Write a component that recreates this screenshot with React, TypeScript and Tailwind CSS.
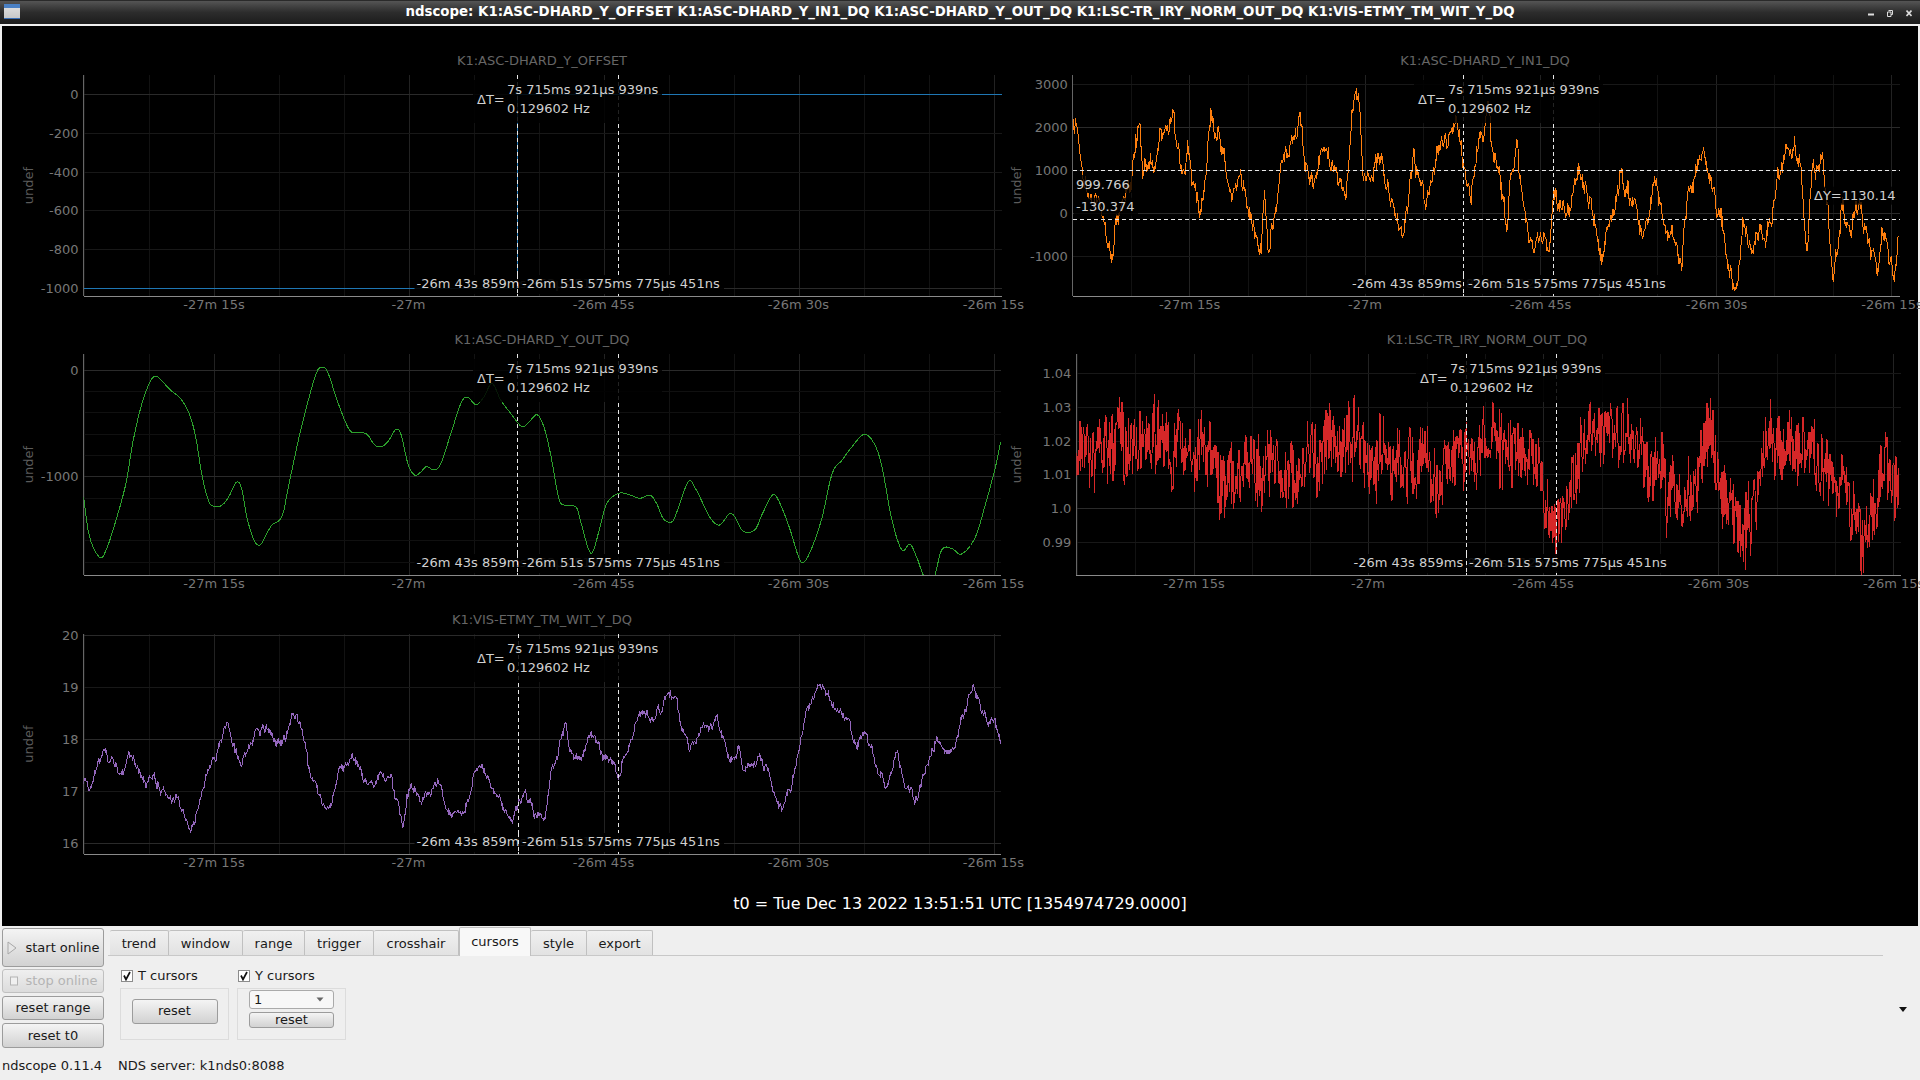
import { useMemo } from 'react'

type Pt = [number, number]

type YLine = { y: number; label?: string; strong?: boolean }

type PlotProps = {
  id: string
  title: string
  box: { x: number; y: number; w: number; h: number }
  x0: number
  x1: number
  y0: number
  y1: number
  titleX: number
  undefX: number
  ticks: number[]
  step: number
  ylines: YLine[]
  t1: number
  t2: number
  deltaX: number
  textX: number
  firstX: number
  secondX: number
  color: string
  line: string
  children?: React.ReactNode
}

const TICK_LABELS = ['-27m 15s', '-27m', '-26m 45s', '-26m 30s', '-26m 15s']

// 低成本的可复现随机数，保证每次渲染的噪声一致
const makeRandom = (seed: number) => {
  let s = seed
  return () => {
    s = (s * 1664525 + 1013904223) % 4294967296
    return s / 4294967296
  }
}

const toPage = (pts: Pt[], sx: number, ox: number, oy: number): Pt[] =>
  pts.map(([x, y]) => [x / sx + ox, y / 3 + oy])

const interp = (pts: Pt[], x: number) => {
  for (let i = 1; i < pts.length; i++) {
    if (x <= pts[i][0]) {
      const [ax, ay] = pts[i - 1]
      const [bx, by] = pts[i]
      return ay + ((by - ay) * (x - ax)) / (bx - ax)
    }
  }
  return pts[pts.length - 1][1]
}

const noisy = (pts: Pt[], seed: number, step: number, walk: number, white: number, spike = 0) => {
  const rand = makeRandom(seed)
  const out: string[] = []
  let ar = 0
  const end = pts[pts.length - 1][0]
  for (let x = pts[0][0]; x <= end; x += step) {
    ar = ar * 0.8 + (rand() - 0.5) * walk
    let n = (rand() - 0.5) * white
    if (spike && rand() < 0.07) n = Math.abs(n) * spike
    out.push(`${x.toFixed(1)},${(interp(pts, x) + ar + n).toFixed(1)}`)
  }
  return out.join(' ')
}

const smooth = (pts: Pt[]) => {
  const out: string[] = []
  for (let i = 0; i < pts.length - 1; i++) {
    const p0 = pts[Math.max(0, i - 1)]
    const p1 = pts[i]
    const p2 = pts[i + 1]
    const p3 = pts[Math.min(pts.length - 1, i + 2)]
    for (let k = 0; k < 6; k++) {
      const t = k / 6
      const c = (a: number, b: number, d: number, e: number) =>
        0.5 *
        (2 * b + (d - a) * t + (2 * a - 5 * b + 4 * d - e) * t * t + (3 * b - a - 3 * d + e) * t * t * t)
      out.push(`${c(p0[0], p1[0], p2[0], p3[0]).toFixed(1)},${c(p0[1], p1[1], p2[1], p3[1]).toFixed(1)}`)
    }
  }
  return out.join(' ')
}

const ORANGE: Pt[] = [[124,385],[133,410],[138,510],[148,560],[160,630],[175,650],[183,700],[190,768],[200,650],[215,570],[225,495],[238,410],[243,525],[255,470],[265,490],[272,405],[285,340],[295,315],[302,400],[312,525],[320,470],[328,545],[338,612],[348,550],[360,330],[372,400],[382,480],[388,595],[400,540],[410,500],[420,620],[435,690],[445,745],[450,570],[458,730],[470,590],[480,500],[490,430],[500,400],[511,335],[520,490],[535,535],[550,425],[565,480],[580,560],[590,605],[600,340],[612,292],[618,490],[628,550],[648,478],[660,570],[670,640],[684,680],[695,620],[705,460],[715,515],[725,640],[735,540],[750,405],[765,440],[780,410],[790,530],[803,585],[820,385],[832,295],[840,470],[850,520],[864,710],[870,530],[880,450],[888,580],[905,770],[920,680],[935,720],[945,610],[965,640],[985,545],[1000,570],[1010,610],[1025,775],[1040,640],[1058,510],[1070,590],[1082,625],[1095,695],[1115,545],[1130,640],[1143,690],[1162,770],[1175,590],[1195,465],[1210,530],[1222,630],[1240,790],[1255,870],[1265,680],[1280,720],[1295,670],[1305,715],[1320,600],[1333,490],[1345,450],[1354,415],[1365,510],[1375,750],[1382,530],[1402,495],[1412,650],[1420,810],[1435,610],[1450,680],[1465,630],[1480,720],[1495,835],[1505,700],[1515,800],[1525,820],[1531,680]]

const GREEN: Pt[] = [[126,530],[135,650],[150,712],[160,690],[175,600],[190,490],[200,370],[212,265],[225,190],[235,168],[245,185],[258,212],[272,235],[285,280],[295,350],[305,470],[315,545],[325,560],[335,555],[345,530],[357,486],[365,510],[372,590],[383,660],[392,675],[400,650],[410,615],[425,590],[435,500],[450,360],[465,240],[478,155],[487,142],[495,160],[510,250],[527,330],[540,338],[553,342],[565,375],[575,380],[585,365],[597,328],[605,345],[615,430],[625,465],[635,455],[643,440],[655,450],[665,430],[680,340],[695,250],[705,232],[718,254],[730,230],[742,190],[755,240],[770,280],[787,320],[798,305],[810,284],[820,320],[830,400],[842,530],[850,555],[868,560],[875,600],[888,690],[895,690],[905,620],[915,550],[933,520],[950,525],[965,535],[980,525],[990,550],[1000,595],[1012,607],[1020,580],[1038,485],[1050,510],[1070,590],[1085,615],[1103,580],[1120,632],[1138,630],[1150,580],[1165,525],[1175,545],[1190,620],[1205,715],[1213,725],[1225,680],[1240,590],[1255,460],[1270,420],[1285,380],[1303,343],[1318,370],[1330,440],[1345,600],[1360,690],[1372,672],[1382,710],[1395,775],[1408,775],[1420,690],[1435,685],[1450,702],[1470,655],[1485,560],[1500,450],[1510,355]]

const RED: Pt[] = [[130,440],[180,360],[240,370],[300,370],[360,400],[370,470],[420,410],[500,470],[550,370],[590,350],[640,430],[680,410],[740,470],[790,400],[850,340],[900,400],[945,640],[1000,350],[1060,360],[1110,430],[1165,570],[1210,330],[1260,700],[1300,350],[1380,400],[1420,480],[1470,680],[1510,420],[1530,500]]

const PURPLE: Pt[] = [[126,555],[137,580],[155,465],[178,525],[195,462],[218,555],[232,520],[250,590],[268,595],[288,680],[300,630],[315,495],[328,450],[343,365],[362,480],[375,465],[387,385],[400,400],[425,445],[442,350],[455,370],[465,490],[485,615],[495,610],[515,500],[537,480],[555,545],[575,520],[590,555],[607,670],[620,545],[640,590],[660,545],[672,630],[698,665],[718,490],[735,525],[750,590],[772,665],[792,565],[805,635],[822,660],[832,515],[853,375],[860,460],[870,495],[893,408],[905,450],[932,522],[950,420],[965,330],[990,350],[1005,280],[1017,275],[1032,400],[1043,445],[1060,380],[1083,365],[1100,480],[1115,435],[1122,525],[1145,470],[1165,565],[1180,645],[1200,500],[1215,340],[1237,248],[1250,290],[1270,340],[1290,420],[1305,410],[1318,470],[1335,570],[1355,455],[1365,560],[1383,600],[1395,515],[1412,415],[1430,460],[1450,370],[1467,255],[1480,340],[1490,360],[1500,350],[1510,420]]

const Plot = ({
  id,
  title,
  box,
  x0,
  x1,
  y0,
  y1,
  titleX,
  undefX,
  ticks,
  step,
  ylines,
  t1,
  t2,
  deltaX,
  textX,
  firstX,
  secondX,
  color,
  line,
  children
}: PlotProps) => {
  const gridXs = useMemo(() => {
    const xs: { x: number; major: boolean }[] = []
    for (let i = -3; i < 16; i++) {
      const x = ticks[0] + i * step
      if (x > x0 && x < x1) xs.push({ x, major: (i + 300) % 3 === 0 })
    }
    return xs
  }, [ticks, step, x0, x1])

  const textY = y0 + 15
  const bottomY = y1 - 12

  return (
    <svg
      viewBox={`${box.x} ${box.y} ${box.w} ${box.h}`}
      width={box.w}
      height={box.h}
      className="block overflow-visible text-[13px]"
    >
      <defs>
        <clipPath id={id}>
          <rect x={x0} y={y0} width={x1 - x0} height={y1 - y0} />
        </clipPath>
      </defs>
      <text x={titleX} y={y0 - 14} textAnchor="middle" dominantBaseline="middle" fill="#666">
        {title}
      </text>
      <text
        x={undefX + 1}
        y={(y0 + y1) / 2}
        textAnchor="middle"
        dominantBaseline="middle"
        fill="#5c5c5c"
        transform={`rotate(-90 ${undefX + 1} ${(y0 + y1) / 2})`}
      >
        undef
      </text>
      {gridXs.map(g => (
        <line key={g.x} x1={g.x} x2={g.x} y1={y0} y2={y1} stroke={g.major ? '#222' : '#121212'} shapeRendering="crispEdges" />
      ))}
      {ylines.map(l => (
        <g key={l.y}>
          <line
            x1={x0}
            x2={x1}
            y1={l.y}
            y2={l.y}
            stroke={l.strong ? '#2a2a2a' : l.label ? '#181818' : '#101010'}
            shapeRendering="crispEdges"
          />
          {l.label && (
            <text x={x0 - 5} y={l.y + 1} textAnchor="end" dominantBaseline="middle" fill="#777">
              {l.label}
            </text>
          )}
        </g>
      ))}
      <line x1={x0} x2={x0} y1={y0} y2={y1} stroke="#666" shapeRendering="crispEdges" />
      <line x1={x0} x2={x1} y1={y1 + 0.5} y2={y1 + 0.5} stroke="#8a8a8a" shapeRendering="crispEdges" />
      {ticks.map((t, i) => (
        <text key={t} x={t} y={y1 + 9} textAnchor="middle" dominantBaseline="middle" fill="#777">
          {TICK_LABELS[i]}
        </text>
      ))}
      <g clipPath={`url(#${id})`}>
        <polyline points={line} fill="none" stroke={color} strokeWidth={1} shapeRendering="crispEdges" />
      </g>
      <line x1={t1} x2={t1} y1={y0} y2={y1} stroke="#e8e8e8" strokeDasharray="4 3" shapeRendering="crispEdges" />
      <line x1={t2} x2={t2} y1={y0} y2={y1} stroke="#e8e8e8" strokeDasharray="4 3" shapeRendering="crispEdges" />
      {children}
      <rect x={deltaX - 4} y={y0 + 5} width={textX + 155 - deltaX + 4} height={43} fill="#000" opacity={0.85} />
      <text x={deltaX} y={textY + 10} dominantBaseline="middle" fill="#d0d0d0">
        ΔT=
      </text>
      <text x={textX} y={textY} dominantBaseline="middle" fill="#d0d0d0">
        7s 715ms 921µs 939ns
      </text>
      <text x={textX} y={textY + 19} dominantBaseline="middle" fill="#d0d0d0">
        0.129602 Hz
      </text>
      <rect x={firstX - 2} y={bottomY - 9} width={204} height={19} fill="#000" opacity={0.9} />
      <text x={firstX} y={bottomY} dominantBaseline="middle" fill="#d0d0d0">
        -26m 43s 859ms 853µs 512ns
      </text>
      <rect x={secondX - 2} y={bottomY - 9} width={204} height={19} fill="#000" opacity={0.92} />
      <text x={secondX} y={bottomY} dominantBaseline="middle" fill="#d0d0d0">
        -26m 51s 575ms 775µs 451ns
      </text>
      <line x1={t1} x2={t1} y1={bottomY - 9} y2={y1} stroke="#e8e8e8" strokeDasharray="4 3" shapeRendering="crispEdges" />
    </svg>
  )
}

const CursorTag = ({ x, y, w, text }: { x: number; y: number; w: number; text: string }) => (
  <g>
    <rect x={x - 2} y={y - 9} width={w} height={18} fill="#000" opacity={0.8} />
    <text x={x} y={y + 1} dominantBaseline="middle" fill="#d0d0d0">
      {text}
    </text>
  </g>
)

const Scope = () => {
  const lines = useMemo(
    () => ({
      orange: noisy(toPage(ORANGE, 1.704, 1000, 0), 11, 0.7, 15, 12),
      green: smooth(toPage(GREEN, 1.508, 0, 320)),
      red: noisy(toPage(RED, 1.701, 1000, 320), 23, 0.6, 20, 62, 1.5),
      purple: noisy(toPage(PURPLE, 1.508, 0, 600), 37, 0.7, 8, 5)
    }),
    []
  )

  const ticksL = [214, 408.5, 603.5, 798.4, 993.4]

  return (
    <div className="h-[900px] mx-[2px] bg-black flex flex-col text-white">
      <div className="grid grid-cols-[1004px_912px] pt-[14px]">
        <Plot
          id="p1"
          title="K1:ASC-DHARD_Y_OFFSET"
          box={{ x: 2, y: 40, w: 1004, h: 279 }}
          x0={83.5}
          x1={1002}
          y0={75}
          y1={296}
          titleX={542}
          undefX={28}
          ticks={ticksL}
          step={65}
          ylines={[
            { y: 94.7, label: '0', strong: true },
            { y: 133.7, label: '-200' },
            { y: 172.7, label: '-400' },
            { y: 210.7, label: '-600' },
            { y: 249.5, label: '-800' },
            { y: 288.7, label: '-1000', strong: true }
          ]}
          t1={517.4}
          t2={618.5}
          deltaX={477}
          textX={507}
          firstX={416.5}
          secondX={522}
          color="#1f77b4"
          line="83.5,288.7 517,288.7 517,94.7 1002,94.7"
        />
        <Plot
          id="p2"
          title="K1:ASC-DHARD_Y_IN1_DQ"
          box={{ x: 1006, y: 40, w: 912, h: 279 }}
          x0={1072.8}
          x1={1899.6}
          y0={75}
          y1={296}
          titleX={1485}
          undefX={1016}
          ticks={[1189.6, 1365, 1540.5, 1716.5, 1892]}
          step={58.5}
          ylines={[
            { y: 84.7, label: '3000' },
            { y: 127.3, label: '2000', strong: true },
            { y: 170.7, label: '1000' },
            { y: 213.7, label: '0', strong: true },
            { y: 256.7, label: '-1000' }
          ]}
          t1={1463.6}
          t2={1553.4}
          deltaX={1418}
          textX={1448}
          firstX={1352}
          secondX={1468}
          color="#ff7f0e"
          line={lines.orange}
        >
          <line x1={1072.8} x2={1899.6} y1={170.5} y2={170.5} stroke="#e8e8e8" strokeDasharray="4 3" shapeRendering="crispEdges" />
          <line x1={1072.8} x2={1899.6} y1={219.5} y2={219.5} stroke="#e8e8e8" strokeDasharray="4 3" shapeRendering="crispEdges" />
          <CursorTag x={1076} y={184} w={58} text="999.766" />
          <CursorTag x={1076} y={206.7} w={64} text="-130.374" />
          <CursorTag x={1814} y={195.7} w={84} text="ΔY=1130.14" />
        </Plot>
        <Plot
          id="p3"
          title="K1:ASC-DHARD_Y_OUT_DQ"
          box={{ x: 2, y: 319, w: 1004, h: 280 }}
          x0={83.5}
          x1={1001}
          y0={354}
          y1={575}
          titleX={542}
          undefX={28}
          ticks={ticksL}
          step={65}
          ylines={[
            { y: 370, label: '0', strong: true },
            { y: 391.3 },
            { y: 412.6 },
            { y: 434 },
            { y: 455.3 },
            { y: 476.7, label: '-1000', strong: true },
            { y: 498 },
            { y: 519.3 },
            { y: 540.6 },
            { y: 562 }
          ]}
          t1={517}
          t2={618.7}
          deltaX={477}
          textX={507}
          firstX={416.5}
          secondX={522}
          color="#2ca02c"
          line={lines.green}
        />
        <Plot
          id="p4"
          title="K1:LSC-TR_IRY_NORM_OUT_DQ"
          box={{ x: 1006, y: 319, w: 912, h: 280 }}
          x0={1076.4}
          x1={1901}
          y0={354}
          y1={575}
          titleX={1487}
          undefX={1016.5}
          ticks={[1194, 1368, 1543, 1718.4, 1893.6]}
          step={58.3}
          ylines={[
            { y: 373.3, label: '1.04' },
            { y: 407.7, label: '1.03' },
            { y: 441.3, label: '1.02' },
            { y: 474.7, label: '1.01' },
            { y: 508.7, label: '1.0', strong: true },
            { y: 542.3, label: '0.99' }
          ]}
          t1={1466}
          t2={1556.7}
          deltaX={1420}
          textX={1450}
          firstX={1353.5}
          secondX={1469}
          color="#d62728"
          line={lines.red}
        />
        <Plot
          id="p5"
          title="K1:VIS-ETMY_TM_WIT_Y_DQ"
          box={{ x: 2, y: 599, w: 1004, h: 279 }}
          x0={83.5}
          x1={1001}
          y0={634}
          y1={854}
          titleX={542}
          undefX={28}
          ticks={ticksL}
          step={65}
          ylines={[
            { y: 635.3, label: '20', strong: true },
            { y: 687.3, label: '19' },
            { y: 739.3, label: '18', strong: true },
            { y: 791.3, label: '17' },
            { y: 843.3, label: '16', strong: true }
          ]}
          t1={518.6}
          t2={618.7}
          deltaX={477}
          textX={507}
          firstX={416.5}
          secondX={522}
          color="#9467bd"
          line={lines.purple}
        />
      </div>
      <div className="flex-1 flex items-center justify-center text-[16px] pt-[3px]">
        t0 = Tue Dec 13 2022 13:51:51 UTC [1354974729.0000]
      </div>
    </div>
  )
}

const btn =
  'flex items-center justify-center rounded-[3px] border border-[#9c9c9c] bg-gradient-to-b from-[#f4f4f4] to-[#d2d2d2] text-[#1a1a1a]'

const TABS = ['trend', 'window', 'range', 'trigger', 'crosshair', 'cursors', 'style', 'export']
const TAB_WIDTHS = ['w-[59px]', 'w-[74px]', 'w-[62px]', 'w-[69px]', 'w-[85px]', 'w-[72px]', 'w-[56px]', 'w-[66px]']

const Check = ({ label }: { label: string }) => (
  <div className="flex items-center h-[12px] gap-[5px] pl-[1px]">
    <span className="w-[12px] h-[12px] border border-[#8c8c8c] bg-white flex items-center justify-center">
      <svg width="10" height="10" viewBox="0 0 10 10">
        <path d="M2 4.5 L4 8.5 L8 1" fill="none" stroke="#111" strokeWidth="1.7" />
      </svg>
    </span>
    <span>{label}</span>
  </div>
)

const Controls = () => (
  <div className="flex-1 relative flex bg-[#efefef] text-[13px] text-[#1a1a1a]">
    <div className="flex flex-col w-[108px] pl-[2px] pt-[2px]">
      <button type="button" className={`${btn} w-[102px] h-[39px] gap-[7px]`}>
        <svg width="12" height="16" viewBox="0 0 12 16">
          <path d="M2 2 L10 8 L2 14 Z" fill="#e6e6e6" stroke="#a8a8a8" />
        </svg>
        <span>start online</span>
      </button>
      <button
        type="button"
        className="mt-[2px] w-[102px] h-[24px] flex items-center justify-center gap-[7px] rounded-[3px] border border-[#c0c0c0] bg-gradient-to-b from-[#efefef] to-[#dcdcdc] text-[#b4b4b4]"
      >
        <svg width="10" height="12" viewBox="0 0 10 12">
          <rect x="1.5" y="2" width="7" height="8" fill="#f0f0f0" stroke="#b4b4b4" />
        </svg>
        <span>stop online</span>
      </button>
      <button type="button" className={`${btn} mt-[3px] w-[102px] h-[24px]`}>
        reset range
      </button>
      <button type="button" className={`${btn} mt-[3px] w-[102px] h-[25px]`}>
        reset t0
      </button>
    </div>
    <div className="flex-1 flex flex-col pt-[2px]">
      <div className="flex items-end h-[28px] w-[1775px] border-b border-[#c8c8c8]">
        <div className="w-[2px]" />
        {TABS.map((tab, i) => (
          <div
            key={tab}
            className={
              tab === 'cursors'
                ? `${TAB_WIDTHS[i]} h-[29px] -mb-[1px] pb-[1px] flex items-center justify-center bg-[#f8f8f8] border border-b-0 border-[#c0c0c0] rounded-t-[2px]`
                : `${TAB_WIDTHS[i]} h-[25px] pt-[1px] flex items-center justify-center bg-gradient-to-b from-[#f0f0f0] to-[#e2e2e2] border border-b-0 border-l-0 first:border-l border-[#c0c0c0] rounded-t-[2px]`
            }
          >
            {tab}
          </div>
        ))}
      </div>
      <div className="flex gap-[8px] pl-[12px] pt-[14px]">
        <div className="flex flex-col w-[109px]">
          <Check label="T cursors" />
          <div className="mt-[6px] h-[52px] pb-[6px] border border-[#dcdcdc] flex items-center justify-center">
            <button type="button" className={`${btn} w-[86px] h-[25px]`}>
              reset
            </button>
          </div>
        </div>
        <div className="flex flex-col w-[109px]">
          <Check label="Y cursors" />
          <div className="mt-[6px] h-[52px] border border-[#dcdcdc] flex flex-col items-center pt-[1px]">
            <div className="w-[85px] h-[19px] flex items-center justify-between pl-[4px] pr-[9px] bg-[#f7f7f7] border border-[#aaa] rounded-[3px]">
              <span>1</span>
              <svg width="8" height="5" viewBox="0 0 8 5">
                <path d="M0.5 0.5 H7.5 L4 4.5 Z" fill="#666" />
              </svg>
            </div>
            <button type="button" className={`${btn} mt-[3px] w-[85px] h-[16px]`}>
              reset
            </button>
          </div>
        </div>
      </div>
    </div>
    <svg className="absolute right-[13px] top-[81px]" width="8" height="5" viewBox="0 0 8 5">
      <path d="M0 0 H8 L4 5 Z" fill="#111" />
    </svg>
    <div className="absolute left-[2px] bottom-[5px] flex gap-[16px]">
      <span>ndscope 0.11.4</span>
      <span>NDS server: k1nds0:8088</span>
    </div>
  </div>
)

const TitleBar = () => (
  <div className="relative h-[24px] shrink-0 flex items-center justify-center bg-gradient-to-b from-[#555555] via-[#2c2c2c] via-50% to-[#1c1c1c] border-t border-[#2a2a2a]">
    <div className="absolute left-[4px] top-[3px] w-[16px] h-[15px] bg-gradient-to-b from-[#dcdcdc] to-[#c8c8c8] border-t-[4px] border-b border-t-[#4a80c4] border-b-[#3a70b8]" />
    <span className="text-[13.35px] font-bold text-white -mt-[1px]">
      ndscope: K1:ASC-DHARD_Y_OFFSET K1:ASC-DHARD_Y_IN1_DQ K1:ASC-DHARD_Y_OUT_DQ K1:LSC-TR_IRY_NORM_OUT_DQ K1:VIS-ETMY_TM_WIT_Y_DQ
    </span>
    <div className="absolute right-[8px] top-[8px] flex items-center gap-[13px]">
      <svg width="6" height="8" viewBox="0 0 6 8">
        <rect x="0" y="4.5" width="6" height="2" fill="#ddd" />
      </svg>
      <svg width="6" height="7" viewBox="0 0 6 7">
        <path d="M1.5 0.5 H5.5 V4.5 H4 M0.5 2 H4 V6.5 H0.5 Z" fill="none" stroke="#ddd" />
      </svg>
      <svg width="6" height="7" viewBox="0 0 6 7">
        <path d="M0.5 0.5 L5.5 6 M5.5 0.5 L0.5 6" stroke="#ddd" strokeWidth="1.6" />
      </svg>
    </div>
  </div>
)

const App = () => {
  return (
    <div className="w-[1920px] h-[1080px] overflow-hidden flex flex-col bg-[#efefef] font-['DejaVu_Sans',sans-serif]">
      <TitleBar />
      <div className="h-[2px] shrink-0" />
      <Scope />
      <Controls />
    </div>
  )
}

export default App
